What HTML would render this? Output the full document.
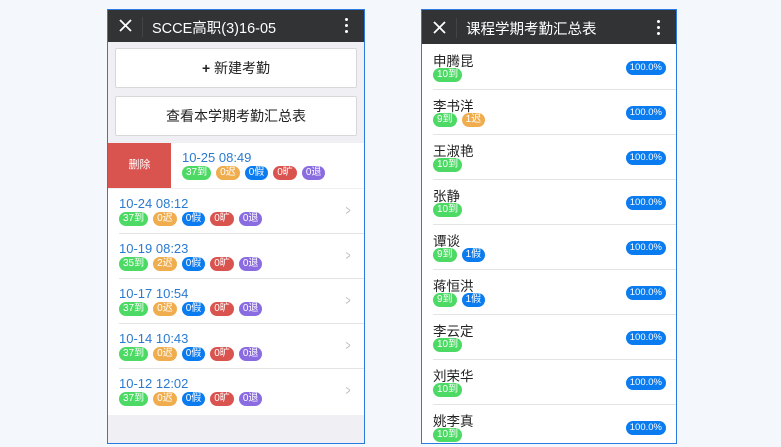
<!DOCTYPE html>
<html><head><meta charset="utf-8"><style>
*{margin:0;padding:0;box-sizing:border-box}
body{width:781px;height:447px;background:#f4f8fc;position:relative;overflow:hidden;font-family:"Liberation Sans","Noto Sans CJK SC",sans-serif}
.ph{position:absolute;border:1px solid #2a7ae2;background:#efeff4;overflow:hidden}
.hd{position:absolute;left:0;right:0;top:0;background:#323335;color:#fff}
.hd svg.x{position:absolute;left:11px}
.hd .sep{position:absolute;left:34px;top:7px;width:1px;height:20px;background:#444}
.hd .t{position:absolute;left:44px;top:7px;font-size:14.5px}
.hd .m{position:absolute;right:16px;width:3px}
.hd .m i{display:block;width:3px;height:3px;background:#fff;border-radius:50%;margin-bottom:3px}
.btn{position:absolute;left:7px;width:242px;height:40px;background:#fff;border:1px solid #d8d8d8;border-radius:2px;text-align:center;line-height:38px;font-size:14px;color:#222}
.row{position:absolute;left:0;width:256px;height:45px;background:#fff}
.row .d{position:absolute;left:11px;top:7px;font-size:13px;color:#2a7ad0}
.row .ln{position:absolute;left:11px;right:0;bottom:0;height:1px;background:#e4e4e4}
.row .ch{position:absolute;right:12px;top:13px;color:#bbb;font-size:14px;transform:scaleX(.6)}
.bd{position:absolute;top:23px;left:11px;white-space:nowrap;font-size:0}
.b{display:inline-block;height:14px;line-height:14px;border-radius:7px;color:#fff;font-size:10px;padding:0 4px;margin-right:5px;text-align:center;vertical-align:top}
.g{background:#4cd964}.o{background:#f0ad4e}.bl{background:#0a7cf0}.r{background:#d9534f}.p{background:#8a6be0}
.nr{position:absolute;left:0;width:254px;height:45px;background:#fff}
.nr .n{position:absolute;left:11px;top:5px;font-size:13.5px;color:#222}
.nr .bd{top:23px;left:11px}
.nr .pc{position:absolute;right:10px;top:16px;background:#0a7cf0;color:#fff;font-size:9.5px;height:14px;line-height:14px;border-radius:7px;padding:0 4px}
.nr .ln{position:absolute;left:11px;right:0;bottom:0;height:1px;background:#e4e4e4}
</style></head><body>
<div class="ph" style="left:107px;top:9px;width:258px;height:435px">
 <div class="hd" style="height:32px"><svg class="x" style="top:9px" width="13" height="13" viewBox="0 0 13 13"><path d="M1 1L12 12M12 1L1 12" stroke="#fff" stroke-width="1.8"/></svg><span class="sep"></span><span class="t">SCCE高职(3)16-05</span><span class="m" style="top:8px"><i></i><i></i><i></i></span></div>
 <div class="btn" style="top:38px"><b>+</b> 新建考勤</div>
 <div class="btn" style="top:86px">查看本学期考勤汇总表</div>
 <div class="row" style="top:133px;height:45px">
  <div style="position:absolute;left:0;top:0;width:63px;height:45px;background:#d9534f;color:#fff;font-size:11px;text-align:center;line-height:45px">删除</div>
  <div class="d" style="left:74px">10-25 08:49</div>
  <div class="bd" style="left:74px"><span class="b g">37到</span><span class="b o">0迟</span><span class="b bl">0假</span><span class="b r">0旷</span><span class="b p">0退</span></div>
 </div>
 <div class="row" style="top:179px"><div class="d">10-24 08:12</div><div class="bd"><span class="b g">37到</span><span class="b o">0迟</span><span class="b bl">0假</span><span class="b r">0旷</span><span class="b p">0退</span></div><span class="ch">&gt;</span><div class="ln"></div></div>
 <div class="row" style="top:224px"><div class="d">10-19 08:23</div><div class="bd"><span class="b g">35到</span><span class="b o">2迟</span><span class="b bl">0假</span><span class="b r">0旷</span><span class="b p">0退</span></div><span class="ch">&gt;</span><div class="ln"></div></div>
 <div class="row" style="top:269px"><div class="d">10-17 10:54</div><div class="bd"><span class="b g">37到</span><span class="b o">0迟</span><span class="b bl">0假</span><span class="b r">0旷</span><span class="b p">0退</span></div><span class="ch">&gt;</span><div class="ln"></div></div>
 <div class="row" style="top:314px"><div class="d">10-14 10:43</div><div class="bd"><span class="b g">37到</span><span class="b o">0迟</span><span class="b bl">0假</span><span class="b r">0旷</span><span class="b p">0退</span></div><span class="ch">&gt;</span><div class="ln"></div></div>
 <div class="row" style="top:359px;height:46px"><div class="d">10-12 12:02</div><div class="bd"><span class="b g">37到</span><span class="b o">0迟</span><span class="b bl">0假</span><span class="b r">0旷</span><span class="b p">0退</span></div><span class="ch">&gt;</span></div>
</div>
<div class="ph" style="left:421px;top:9px;width:256px;height:435px;background:#fff">
 <div class="hd" style="height:34px"><svg class="x" style="top:11px" width="13" height="13" viewBox="0 0 13 13"><path d="M1 1L12 12M12 1L1 12" stroke="#fff" stroke-width="1.8"/></svg><span class="sep" style="top:8px"></span><span class="t" style="top:8px">课程学期考勤汇总表</span><span class="m" style="top:10px"><i></i><i></i><i></i></span></div>
 <div class="nr" style="top:35px"><div class="n">申腾昆</div><div class="bd"><span class="b g">10到</span></div><span class="pc">100.0%</span><div class="ln"></div></div>
 <div class="nr" style="top:80px"><div class="n">李书洋</div><div class="bd"><span class="b g">9到</span><span class="b o">1迟</span></div><span class="pc">100.0%</span><div class="ln"></div></div>
 <div class="nr" style="top:125px"><div class="n">王淑艳</div><div class="bd"><span class="b g">10到</span></div><span class="pc">100.0%</span><div class="ln"></div></div>
 <div class="nr" style="top:170px"><div class="n">张静</div><div class="bd"><span class="b g">10到</span></div><span class="pc">100.0%</span><div class="ln"></div></div>
 <div class="nr" style="top:215px"><div class="n">谭谈</div><div class="bd"><span class="b g">9到</span><span class="b bl">1假</span></div><span class="pc">100.0%</span><div class="ln"></div></div>
 <div class="nr" style="top:260px"><div class="n">蒋恒洪</div><div class="bd"><span class="b g">9到</span><span class="b bl">1假</span></div><span class="pc">100.0%</span><div class="ln"></div></div>
 <div class="nr" style="top:305px"><div class="n">李云定</div><div class="bd"><span class="b g">10到</span></div><span class="pc">100.0%</span><div class="ln"></div></div>
 <div class="nr" style="top:350px"><div class="n">刘荣华</div><div class="bd"><span class="b g">10到</span></div><span class="pc">100.0%</span><div class="ln"></div></div>
 <div class="nr" style="top:395px"><div class="n">姚李真</div><div class="bd"><span class="b g">10到</span></div><span class="pc">100.0%</span></div>
</div>
</body></html>
